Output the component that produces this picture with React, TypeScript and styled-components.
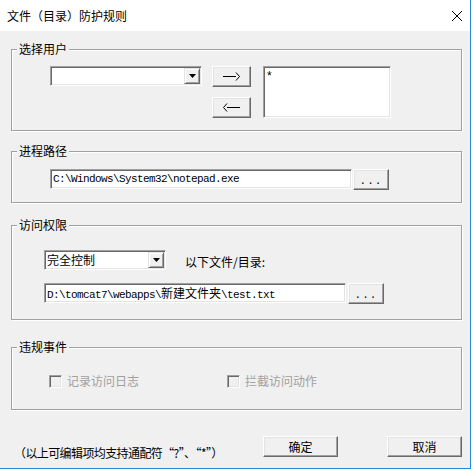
import React from 'react';
import styled, { createGlobalStyle } from 'styled-components';

const GlobalStyle = createGlobalStyle`
  html, body {
    margin: 0;
    padding: 0;
    background: #fff;
  }
  body {
    font-family: "Noto Sans CJK SC", "Liberation Sans", sans-serif;
    font-size: 12px;
    color: #000;
  }
  * {
    box-sizing: border-box;
  }
`;

const Screen = styled.div`
  width: 474px;
  height: 470px;
  overflow: hidden;
  background: #fff;
`;

const Window = styled.div`
  width: 471px;
  height: 469px;
  display: flex;
  flex-direction: column;
  background: #f0f0f0;
  border-right: 1px solid #2b88d8;
  border-bottom: 1px solid #2b88d8;
`;

const TitleBar = styled.div`
  height: 31px;
  flex: none;
  display: flex;
  align-items: center;
  justify-content: space-between;
  padding: 0 8px 0 7px;
  background: #fff;
  font-size: 12px;
  line-height: 16px;
`;

const Body = styled.div`
  flex: 1;
  display: flex;
  flex-direction: column;
  padding: 18px 8px 0 11px;
`;

const Group = styled.div<{ $h: number; $mt?: number }>`
  position: relative;
  height: ${({ $h }) => $h}px;
  margin-top: ${({ $mt }) => $mt || 0}px;
  border: 1px solid #a0a0a0;
  box-shadow: 1px 1px 0 #fff, inset 1px 1px 0 #fff;
`;

const Legend = styled.span`
  position: absolute;
  top: -9px;
  left: 5px;
  padding: 0 2px;
  line-height: 16px;
  background: #f0f0f0;
`;

const Row = styled.div<{ $pt: number; $pl: number }>`
  display: flex;
  align-items: flex-start;
  padding: ${({ $pt, $pl }) => `${$pt}px 0 0 ${$pl}px`};
`;

const Stack = styled.div<{ $gap: number }>`
  display: flex;
  flex-direction: column;
  gap: ${({ $gap }) => $gap}px;
`;

const Sunken = styled.div<{ $w: number; $h: number }>`
  width: ${({ $w }) => $w}px;
  height: ${({ $h }) => $h}px;
  flex: none;
  background: #fff;
  border: 1px solid;
  border-color: #a0a0a0 #fff #fff #a0a0a0;
  box-shadow: inset 1px 1px 0 #696969, inset -1px -1px 0 #e3e3e3;
`;

const Combo = styled(Sunken)`
  display: flex;
  align-items: center;
  justify-content: space-between;
  padding: 1px 1px 1px 2px;
  line-height: 16px;
`;

const DropButton = styled.span`
  width: 16px;
  height: 16px;
  display: flex;
  align-items: center;
  justify-content: center;
  background: #f0f0f0;
  border: 1px solid;
  border-color: #e3e3e3 #696969 #696969 #e3e3e3;
  box-shadow: inset 1px 1px 0 #fff, inset -1px -1px 0 #a0a0a0;
`;

const Field = styled(Sunken)`
  padding: 2px 0 0 2px;
  font-family: "Liberation Mono", "Noto Sans CJK SC", monospace;
  font-size: 11px;
  letter-spacing: -0.6px;
  line-height: 14px;
  white-space: nowrap;
  overflow: hidden;
`;

const Wide = styled.span`
  font-family: "Noto Sans CJK SC", sans-serif;
  font-size: 12px;
  letter-spacing: 0;
`;

const ListBox = styled(Sunken)`
  margin-left: 12px;
  padding: 2px 3px;
  font-family: "Liberation Sans", sans-serif;
  font-size: 12px;
  line-height: 14px;
`;

const Button = styled.button<{ $w: number; $h?: number }>`
  width: ${({ $w }) => $w}px;
  height: ${({ $h }) => $h || 21}px;
  flex: none;
  padding: 0;
  display: flex;
  align-items: center;
  justify-content: center;
  background: #f0f0f0;
  color: #000;
  font-family: "Noto Sans CJK SC", sans-serif;
  font-size: 12px;
  line-height: 16px;
  border: 1px solid;
  border-color: #fff #696969 #696969 #fff;
  box-shadow: inset -1px -1px 0 #a0a0a0, inset 1px 1px 0 #e3e3e3;
  border-radius: 0;
`;

const Dots = styled.span`
  font-family: "Liberation Mono", monospace;
  font-size: 11px;
  letter-spacing: 1px;
  padding-top: 2px;
`;

const Label = styled.span`
  margin-left: 19px;
  padding-top: 4px;
  line-height: 16px;
`;

const CheckRow = styled.div`
  display: grid;
  grid-template-columns: 178px auto;
  padding: 25px 0 0 37px;
`;

const CheckItem = styled.label`
  display: flex;
  align-items: center;
  gap: 5px;
  color: #a0a0a0;
  line-height: 16px;
`;

const CheckBox = styled.span`
  width: 13px;
  height: 13px;
  background: #f0f0f0;
  border: 1px solid;
  border-color: #a0a0a0 #fff #fff #a0a0a0;
  box-shadow: inset 1px 1px 0 #696969, inset -1px -1px 0 #e3e3e3;
`;

const Footer = styled.div`
  display: flex;
  align-items: flex-start;
  margin-top: 26px;
`;

const Hint = styled.span`
  flex: 1;
  padding: 9px 0 0 3px;
  line-height: 16px;
  letter-spacing: -0.6px;
`;

const ButtonRow = styled.div`
  display: flex;
  gap: 49px;
`;

const Arrow = ({ left }: { left?: boolean }) => (
  <svg width="17" height="9" viewBox="0 0 17 9">
    {left ? (
      <path d="M4 0.5 L0.5 4.5 L4 8.5 M4 4.5 H17" stroke="#000" fill="none" strokeWidth="1" />
    ) : (
      <path d="M0 4.5 H13 M13 0.5 L16.5 4.5 L13 8.5" stroke="#000" fill="none" strokeWidth="1" />
    )}
  </svg>
);

const Triangle = () => (
  <svg width="7" height="4" viewBox="0 0 7 4">
    <path d="M0 0 H7 L3.5 4 Z" fill="#000" />
  </svg>
);

const CloseIcon = () => (
  <svg width="10" height="10" viewBox="0 0 10 10">
    <path d="M0 0 L10 10 M10 0 L0 10" stroke="#000" strokeWidth="1" />
  </svg>
);

const App: React.FC = () => {
  return (
    <Screen>
      <GlobalStyle />
      <Window>
        <TitleBar>
          <span>文件（目录）防护规则</span>
          <CloseIcon />
        </TitleBar>
        <Body>
          <Group $h={82}>
            <Legend>选择用户</Legend>
            <Row $pt={16} $pl={38}>
              <Combo $w={152} $h={20}>
                <span />
                <DropButton>
                  <Triangle />
                </DropButton>
              </Combo>
              <Stack $gap={10} style={{ marginLeft: 10 }}>
                <Button $w={39}>
                  <Arrow />
                </Button>
                <Button $w={39}>
                  <Arrow left />
                </Button>
              </Stack>
              <ListBox $w={128} $h={52}>*</ListBox>
            </Row>
          </Group>

          <Group $h={52} $mt={20}>
            <Legend>进程路径</Legend>
            <Row $pt={17} $pl={38}>
              <Field $w={302} $h={20}>C:\Windows\System32\notepad.exe</Field>
              <Button $w={36} style={{ marginLeft: 1 }}>
                <Dots>...</Dots>
              </Button>
            </Row>
          </Group>

          <Group $h={95} $mt={22}>
            <Legend>访问权限</Legend>
            <Row $pt={24} $pl={32}>
              <Combo $w={122} $h={20}>
                <span>完全控制</span>
                <DropButton>
                  <Triangle />
                </DropButton>
              </Combo>
              <Label>以下文件/目录:</Label>
            </Row>
            <Row $pt={13} $pl={32}>
              <Field $w={302} $h={20}>
                D:\tomcat7\webapps\<Wide>新建文件夹</Wide>\test.txt
              </Field>
              <Button $w={36} style={{ marginLeft: 2 }}>
                <Dots>...</Dots>
              </Button>
            </Row>
          </Group>

          <Group $h={63} $mt={27}>
            <Legend>违规事件</Legend>
            <CheckRow>
              <CheckItem>
                <CheckBox />
                记录访问日志
              </CheckItem>
              <CheckItem>
                <CheckBox />
                拦截访问动作
              </CheckItem>
            </CheckRow>
          </Group>

          <Footer>
            <Hint>（以上可编辑项均支持通配符“?”、“*”）</Hint>
            <ButtonRow>
              <Button $w={75}>确定</Button>
              <Button $w={75}>取消</Button>
            </ButtonRow>
          </Footer>
        </Body>
      </Window>
    </Screen>
  );
};

export default App;
